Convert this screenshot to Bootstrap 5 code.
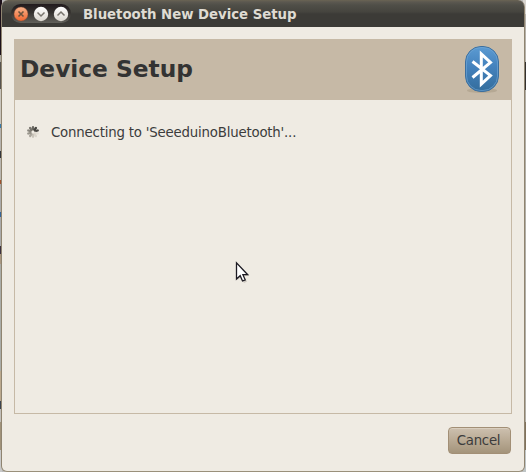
<!DOCTYPE html>
<html lang="en">
<head>
<meta charset="utf-8">
<title>Bluetooth New Device Setup</title>
<link href="https://cdn.jsdelivr.net/npm/bootstrap@5.3.0/dist/css/bootstrap.min.css" rel="stylesheet">
<style>
body{font-family:"DejaVu Sans",sans-serif;color:#3c3c3c;width:526px;height:472px;padding:0 1px 0 1px;
background:
linear-gradient(#1c1019 0 55px,#aaa69c 55px 62px,#57534f 62px 89px,#c9c5bd 89px 124px,#377aa9 124px 128px,#b6b3ae 128px 151px,#33363d 151px 158px,#b9b6b0 158px 180px,#a0522d 180px 184px,#aaa 184px 212px,#35659a 212px 217px,#aaa 217px 246px,#3b3140 246px 254px,#a99781 254px 264px,#aaaca8 264px 371px,#bba98e 371px 401px,#3c4450 401px 409px,#c2bfba 409px 422px,#a0927a 422px 450px,#c8c8c8 450px) 0 0/2px 100% no-repeat,
linear-gradient(#d8d5d0 0 14px,#b5b1a9 14px 62px,#33312e 62px 90px,#b1aea6 90px 422px,#80725c 422px 450px,#bfc5c6 450px) 100% 0/3px 100% no-repeat,#bbb}
.dialog-window{width:524px;height:472px;background:#efebe3;border:1px solid #8f8470;border-top:0;border-bottom-color:#9a907b;border-radius:7px 7px 6px 6px}
.titlebar{height:27px;background:linear-gradient(#6a6453 0,#5b5850 2px,#504f48 5px,#45443e 12px,#3c3b37 14px,#3c3b37);border-radius:6px 6px 0 0;padding:4px 0 0 9px}
.window-buttons{width:60px;height:19px;border-radius:10px;background:linear-gradient(#211a1d,#35322f 45%,#62615b);flex:none}
.window-title{font-size:13.33px;font-weight:700;color:#dfdbd2;line-height:21px;letter-spacing:-.04px;margin-left:12px;white-space:nowrap}
.panel{margin:12px 12px 0 12px;width:498px;height:375px;border:1px solid #c6b9a6}
.panel-head{height:60px;background:#c6b9a6;padding:0 11px 0 5px}
.panel-head h1{font-size:23.3px;font-weight:700;margin:0;line-height:58px;height:60px;color:#333;white-space:nowrap}
.status-row{padding:23px 0 0 12px;height:41px}
.status-text{font-size:13.33px;line-height:20px;letter-spacing:-.2px;margin-left:12px;white-space:nowrap}
.cancel{width:63px;height:27px;margin:13px 13px 0 0;padding:0 2px 0 0;font-size:13.33px;letter-spacing:-.25px;line-height:25px;border:1px solid #a28f76;border-radius:4px;background:linear-gradient(#cdc0af,#b9aa94 50%,#a4947b);color:#3c3c3c;box-shadow:inset 0 1px #d9cebe}
.pointer{position:absolute;left:235px;top:261px}
svg{display:block;flex:none}
</style>
</head>
<body class="overflow-hidden">
<main class="dialog-window d-flex flex-column">
<header class="titlebar d-flex">
<div class="window-buttons">
<svg width="60" height="19" viewBox="0 0 60 19">
<defs><linearGradient id="o" x2="0" y2="1"><stop stop-color="#f8b48c"/><stop offset="1" stop-color="#f0652f"/></linearGradient>
<linearGradient id="w" x2="0" y2="1"><stop stop-color="#fff"/><stop offset="1" stop-color="#dad6ce"/></linearGradient></defs>
<circle cx="10" cy="10" r="7" fill="url(#o)" stroke="#8d4a30" stroke-width=".4"/>
<path d="M7.500 7.500l5 5m0-5l-5 5" stroke="#6b523c" stroke-width="1.600"/>
<circle cx="30" cy="10" r="7.200" fill="url(#w)"/><path d="M26.500 8.500L30 12l3.500-3.500" fill="none" stroke="#77736c" stroke-width="1.500"/>
<circle cx="50" cy="10" r="7.200" fill="url(#w)"/><path d="M46.500 11.500L50 8l3.500 3.500" fill="none" stroke="#77736c" stroke-width="1.500"/>
</svg></div>
<div class="window-title">Bluetooth New Device Setup</div>
</header>
<section class="panel">
<div class="panel-head d-flex justify-content-between align-items-center">
<h1>Device Setup</h1>
<svg width="36" height="50" viewBox="0 0 36 50">
<defs><linearGradient id="b" x2="0" y2="1"><stop stop-color="#5c9bd2"/><stop offset=".45" stop-color="#4482bd"/><stop offset="1" stop-color="#346d9c"/></linearGradient></defs>
<ellipse cx="18" cy="45.500" rx="15" ry="2.500" fill="#9c8e79" opacity=".4"/>
<rect x="1.500" y="1.500" width="33" height="45" rx="15.500" fill="url(#b)" stroke="#3b6f9f"/>
<rect x="2.500" y="2.500" width="31" height="43" rx="14.500" fill="none" stroke="#73a9d7" opacity=".6"/>
<path d="M8.500 16.500L26.500 30.500L17.300 39V9L26.500 17.500L8.500 32.500" fill="none" stroke="#fff" stroke-width="3"/>
</svg>
</div>
<div class="status-row d-flex">
<svg width="12" height="18" viewBox="-6 -9 12 18" stroke-width="2.300" stroke-linecap="round">
<path d="M0-2.600V-4.800" stroke="#6a6861"/><path d="M1.600-2.200L2.900-4" stroke="#454440"/><path d="M2.500-.9L4.700-1.500" stroke="#4b4945"/><path d="M2.500 .9L4.700 1.500" stroke="#e3ded5"/><path d="M1.600 2.200L2.900 4" stroke="#dad5cb"/><path d="M0 2.600V4.800" stroke="#c9c4ba"/><path d="M-1.600 2.200L-2.900 4" stroke="#aca79e"/><path d="M-2.500 .9L-4.700 1.500" stroke="#99958c"/><path d="M-2.500-.9L-4.700-1.500" stroke="#89857d"/><path d="M-1.600-2.200L-2.900-4" stroke="#77746d"/>
</svg>
<div class="status-text">Connecting to 'SeeeduinoBluetooth'...</div>
</div>
</section>
<footer class="d-flex justify-content-end"><button type="button" class="btn cancel">Cancel</button></footer>
</main>
<svg class="pointer" width="15" height="23" viewBox="0 0 15 23"><path d="M2.500 3v16l3.500-3 3 6 3-1.500-3-5.500h5z" fill="#8b857a" opacity=".35"/><path d="M1.500 1.800V18L5.200 14.700L7.500 20L10.200 18.800L7.900 13.700H12.700Z" fill="#fff" stroke="#1c1a22" stroke-width="1.300"/></svg>
<script src="https://cdn.jsdelivr.net/npm/bootstrap@5.3.0/dist/js/bootstrap.bundle.min.js"></script>
</body>
</html>
